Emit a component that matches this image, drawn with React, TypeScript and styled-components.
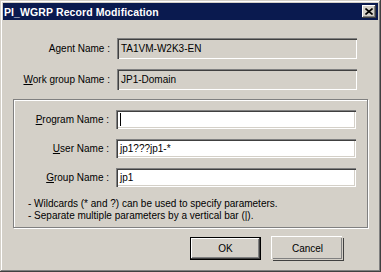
import styled, { createGlobalStyle } from 'styled-components';

const GlobalStyle = createGlobalStyle`
  html, body {
    margin: 0;
    padding: 0;
    background: #d4d0c8;
  }
  body {
    font-family: "Liberation Sans", Arial, sans-serif;
    font-size: 10px;
    color: #000;
  }
`;

const Window = styled.div`
  width: 381px;
  height: 272px;
  box-sizing: border-box;
  padding: 3px;
  background: #d4d0c8;
  display: flex;
  flex-direction: column;
  box-shadow: inset -1px -1px 0 #404040, inset 1px 1px 0 #d4d0c8,
    inset -2px -2px 0 #808080, inset 2px 2px 0 #ffffff;
`;

const TitleBar = styled.div`
  height: 17px;
  background: #0a1a4f;
  color: #fff;
  display: flex;
  align-items: center;
  justify-content: space-between;
  padding: 0 2px 0 1px;
`;

const Title = styled.span`
  font-weight: bold;
  font-size: 10.5px;
  letter-spacing: 0.1px;
`;

const CloseButton = styled.div`
  width: 14px;
  height: 13px;
  box-sizing: border-box;
  background: #d4d0c8;
  display: flex;
  align-items: center;
  justify-content: center;
  box-shadow: inset -1px -1px 0 #404040, inset 1px 1px 0 #ffffff,
    inset -2px -2px 0 #808080;
`;

const Body = styled.div`
  display: flex;
  flex-direction: column;
  padding-top: 18px;
`;

const FieldRow = styled.div<{ labelWidth: number; tall?: boolean }>`
  display: grid;
  grid-template-columns: ${({ labelWidth }) => labelWidth}px 240px;
  column-gap: 7px;
  align-items: center;
  height: ${({ tall }) => (tall ? 21 : 19)}px;
  & + & {
    margin-top: ${({ tall }) => (tall ? 7 : 10)}px;
  }
`;

const Label = styled.div`
  text-align: right;
  white-space: nowrap;
`;

const Field = styled.div<{ readOnly?: boolean }>`
  height: 100%;
  box-sizing: border-box;
  background: ${({ readOnly }) => (readOnly ? '#d4d0c8' : '#ffffff')};
  padding: 0 4px;
  display: flex;
  align-items: center;
  white-space: nowrap;
  box-shadow: inset 1px 1px 0 #808080, inset 2px 2px 0 #404040,
    inset -1px -1px 0 #ffffff, inset -2px -2px 0 #d4d0c8;
`;

const Caret = styled.span`
  display: inline-block;
  width: 1px;
  height: 13px;
  background: #000;
`;

const GroupBox = styled.div`
  margin: 9px 0 0 10px;
  width: 355px;
  box-sizing: border-box;
  border: 1px solid #808080;
  box-shadow: inset 1px 1px 0 #ffffff, 1px 1px 0 #ffffff;
  padding: 10px 0 5px 0;
`;

const Notes = styled.div`
  margin: 11px 0 0 14px;
  line-height: 12px;
`;

const ButtonRow = styled.div`
  display: flex;
  justify-content: flex-end;
  gap: 11px;
  margin-top: 9px;
  padding-right: 35px;
`;

const Button = styled.div<{ isDefault?: boolean }>`
  width: 71px;
  height: 23px;
  box-sizing: border-box;
  display: flex;
  align-items: center;
  justify-content: center;
  background: #d4d0c8;
  border: 1px solid ${({ isDefault }) => (isDefault ? '#000' : 'transparent')};
  box-shadow: ${({ isDefault }) =>
    isDefault
      ? 'inset -1px -1px 0 #404040, inset 1px 1px 0 #ffffff, inset -2px -2px 0 #808080'
      : '-1px -1px 0 #ffffff, 1px 1px 0 #404040, inset -1px -1px 0 #808080'};
`;

export default function App() {
  return (
    <>
      <GlobalStyle />
      <Window>
        <TitleBar>
          <Title>PI_WGRP Record Modification</Title>
          <CloseButton>
            <svg width="8" height="7" viewBox="0 0 8 7">
              <path d="M0.5 0.5 L7.5 6.5 M7.5 0.5 L0.5 6.5" stroke="#000" strokeWidth="1.6" />
            </svg>
          </CloseButton>
        </TitleBar>
        <Body>
          <FieldRow labelWidth={107} tall>
            <Label>Agent Name :</Label>
            <Field readOnly>TA1VM-W2K3-EN</Field>
          </FieldRow>
          <FieldRow labelWidth={107} tall>
            <Label><u>W</u>ork group Name :</Label>
            <Field readOnly>JP1-Domain</Field>
          </FieldRow>
          <GroupBox>
            <FieldRow labelWidth={95}>
              <Label><u>P</u>rogram Name :</Label>
              <Field><Caret /></Field>
            </FieldRow>
            <FieldRow labelWidth={95}>
              <Label><u>U</u>ser Name :</Label>
              <Field>jp1???jp1-*</Field>
            </FieldRow>
            <FieldRow labelWidth={95}>
              <Label><u>G</u>roup Name :</Label>
              <Field>jp1</Field>
            </FieldRow>
            <Notes>
              - Wildcards (* and ?) can be used to specify parameters.
              <br />
              - Separate multiple parameters by a vertical bar (|).
            </Notes>
          </GroupBox>
          <ButtonRow>
            <Button isDefault>OK</Button>
            <Button>Cancel</Button>
          </ButtonRow>
        </Body>
      </Window>
    </>
  );
}
